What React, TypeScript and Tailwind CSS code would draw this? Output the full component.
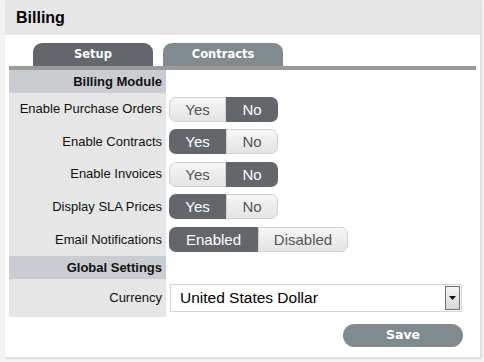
import React, { useState } from "react";

type Opt = { label: string; w: string };

function Toggle({ options, value }: { options: Opt[]; value: number }) {
  const [sel, setSel] = useState(value);
  return (
    <div className="flex h-[25px]">
      {options.map((o, i) => {
        const on = i === sel;
        const first = i === 0;
        const last = i === options.length - 1;
        return (
          <button
            key={o.label}
            type="button"
            onClick={() => setSel(i)}
            className={[
              "flex items-center justify-center text-[15px] leading-none",
              o.w,
              first ? "rounded-l-[7px]" : "",
              last ? "rounded-r-[7px]" : "",
              on
                ? "bg-[#63676b] text-white"
                : "border border-[#d2d2d2] bg-gradient-to-b from-[#f6f6f6] to-[#e4e4e4] text-[#555]",
            ].join(" ")}
          >
            {o.label}
          </button>
        );
      })}
    </div>
  );
}

const yesNo: Opt[] = [
  { label: "Yes", w: "w-[57px]" },
  { label: "No", w: "w-[52px]" },
];

const rows: { label: string; value: number; h: string }[] = [
  { label: "Enable Purchase Orders", value: 1, h: "h-[32px]" },
  { label: "Enable Contracts", value: 0, h: "h-[33px]" },
  { label: "Enable Invoices", value: 1, h: "h-[32px]" },
  { label: "Display SLA Prices", value: 0, h: "h-[33px]" },
];

function Section({ title }: { title: string }) {
  return (
    <div className="flex h-[23px]">
      <div className="flex w-[157px] items-center justify-end bg-[#c9ccd0] pr-[4px] text-[13px] font-bold text-[#111]">
        {title}
      </div>
    </div>
  );
}

function Row({ label, children, h }: { label: string; children: React.ReactNode; h: string }) {
  return (
    <div className={`flex ${h}`}>
      <div className="flex w-[157px] items-center justify-end bg-[#e6e6e6] pr-[4px] text-[13px] text-[#111]">
        {label}
      </div>
      <div className="flex items-center pl-[3px]">{children}</div>
    </div>
  );
}

export default function App() {
  return (
    <div
      className="h-[362px] w-[484px] bg-[#f3f3f3] pl-[5px] pr-[3px]"
      style={{ fontFamily: '"Liberation Sans", Arial, sans-serif' }}
    >
      <div className="h-[358px] border-r border-b border-[#dedede] bg-white shadow-[1px_1px_2px_rgba(0,0,0,0.08)]">
        <div className="flex h-[35px] items-center bg-[#e6e6e6] pl-[11px] text-[16px] font-bold text-black">
          Billing
        </div>

        <div className="px-[4px] pt-[8px]">
          <div className="flex gap-[10px] pl-[24px]">
            {["Setup", "Contracts"].map((t, i) => (
              <div
                key={t}
                className={`flex h-[23px] w-[120px] items-center justify-center rounded-t-[9px] text-[11.5px] font-bold text-white ${
                  i === 0 ? "bg-[#63676b]" : "bg-[#818a8e]"
                }`}
                style={{ fontFamily: '"DejaVu Sans", Verdana, sans-serif' }}
              >
                {t}
              </div>
            ))}
          </div>
          <div className="h-[4px] w-[467px] bg-[#9a9a9a]" />

          <Section title="Billing Module" />
          {rows.map((r) => (
            <Row key={r.label} label={r.label} h={r.h}>
              <Toggle options={yesNo} value={r.value} />
            </Row>
          ))}
          <Row label="Email Notifications" h="h-[33px]">
            <Toggle
              options={[
                { label: "Enabled", w: "w-[89px]" },
                { label: "Disabled", w: "w-[90px]" },
              ]}
              value={0}
            />
          </Row>
          <Section title="Global Settings" />
          <Row label="Currency" h="h-[38px]">
            <div className="ml-[1px] flex h-[28px] w-[292px] items-center border border-[#d4d4d4] bg-white pr-[1px]">
              <span className="flex-1 pl-[9px] text-[15.5px] text-black">United States Dollar</span>
              <div className="flex h-[24px] w-[15px] items-center justify-center border border-[#6e6e6e] bg-gradient-to-b from-[#f4f4f4] to-[#d8d8d8]">
                <svg width="7" height="4" viewBox="0 0 7 4">
                  <path d="M0 0h7L3.5 4z" fill="#111" />
                </svg>
              </div>
            </div>
          </Row>

          <div className="flex justify-end pr-[13px] pt-[7px]">
            <button
              type="button"
              className="h-[23px] w-[120px] rounded-full bg-[#818a8e] text-[12.5px] font-bold text-white"
              style={{ fontFamily: '"DejaVu Sans", Verdana, sans-serif' }}
            >
              Save
            </button>
          </div>
        </div>
      </div>
    </div>
  );
}
